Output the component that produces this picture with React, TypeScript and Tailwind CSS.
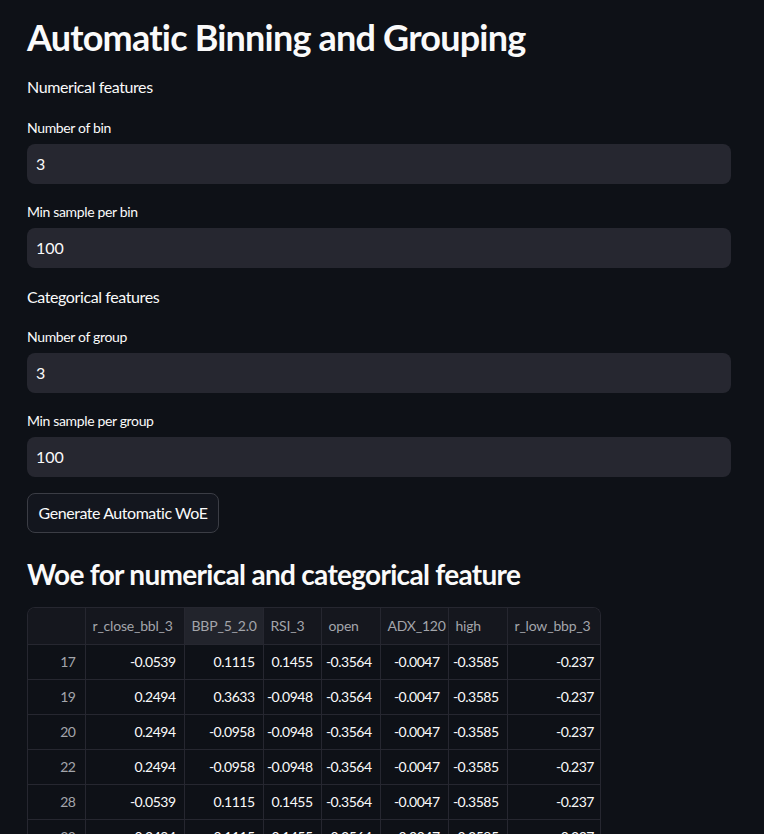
import React from "react";

const columns = ["r_close_bbl_3", "BBP_5_2.0", "RSI_3", "open", "ADX_120", "high", "r_low_bbp_3"];
const widths = ["w-[57px]", "w-[99px]", "w-[79px]", "w-[58px]", "w-[59px]", "w-[68px]", "w-[59px]", "w-[95px]"];

const rows: [string, string[]][] = [
  ["17", ["-0.0539", "0.1115", "0.1455", "-0.3564", "-0.0047", "-0.3585", "-0.237"]],
  ["19", ["0.2494", "0.3633", "-0.0948", "-0.3564", "-0.0047", "-0.3585", "-0.237"]],
  ["20", ["0.2494", "-0.0958", "-0.0948", "-0.3564", "-0.0047", "-0.3585", "-0.237"]],
  ["22", ["0.2494", "-0.0958", "-0.0948", "-0.3564", "-0.0047", "-0.3585", "-0.237"]],
  ["28", ["-0.0539", "0.1115", "0.1455", "-0.3564", "-0.0047", "-0.3585", "-0.237"]],
  ["30", ["0.2494", "0.1115", "0.1455", "-0.3564", "-0.0047", "-0.3585", "-0.237"]],
];

function Field({ label, value }: { label: string; value: string }) {
  return (
    <div className="flex flex-col">
      <label className="text-[14px] leading-5 tracking-[-0.35px] text-[#fafafa]">{label}</label>
      <div className="mt-[6px] h-10 w-full rounded-lg bg-[#262730] flex items-center pl-[9px] text-[16px] text-[#fafafa]">
        {value}
      </div>
    </div>
  );
}

export default function App() {
  return (
    <div
      className="w-full h-[834px] overflow-hidden bg-[#0e1117] text-[#fafafa]"
      style={{ fontFamily: "Lato, 'Liberation Sans', sans-serif" }}
    >
      <div className="pl-[27px] pr-[33px] pt-4">
        <h1 className="text-[36px] leading-[43px] font-bold tracking-[-0.8px]">Automatic Binning and Grouping</h1>

        <p className="mt-4 text-[16px] leading-6 tracking-[-0.4px]">Numerical features</p>
        <div className="mt-[19px]">
          <Field label="Number of bin" value="3" />
        </div>
        <div className="mt-[18px]">
          <Field label="Min sample per bin" value="100" />
        </div>

        <p className="mt-[17px] text-[16px] leading-6 tracking-[-0.4px]">Categorical features</p>
        <div className="mt-[18px]">
          <Field label="Number of group" value="3" />
        </div>
        <div className="mt-[18px]">
          <Field label="Min sample per group" value="100" />
        </div>

        <button className="mt-4 h-10 w-[192px] rounded-lg border border-[#3b3d45] bg-[#13161e] text-[16px] tracking-[-0.45px] text-[#fafafa]">
          Generate Automatic WoE
        </button>

        <h2 className="mt-6 text-[28px] leading-[34px] font-bold tracking-[-0.7px]">
          Woe for numerical and categorical feature
        </h2>

        <div className="mt-4 w-[574px] rounded-t-lg border border-b-0 border-[#262730] overflow-hidden">
          <table className="border-collapse text-[14px] tracking-[-0.5px] table-fixed w-full">
            <thead>
              <tr className="h-[36px] bg-[#15171e] text-[#a3a5ab]">
                <th className={`${widths[0]} border-r border-b border-[#262730]`}></th>
                {columns.map((c, i) => (
                  <th
                    key={c}
                    className={`${widths[i + 1]} border-r last:border-r-0 border-b border-[#262730] font-normal text-left pl-[7px] tracking-[-0.2px] whitespace-nowrap overflow-hidden ${
                      i === 1 ? "bg-[#22242c]" : ""
                    }`}
                  >
                    {c}
                  </th>
                ))}
              </tr>
            </thead>
            <tbody>
              {rows.map(([idx, vals]) => (
                <tr key={idx} className="h-[35px]">
                  <td className="border-r border-b border-[#262730] text-right pr-[9px] text-[#a3a5ab]">{idx}</td>
                  {vals.map((v, i) => (
                    <td
                      key={i}
                      className="border-r last:border-r-0 border-b border-[#262730] text-right pr-[8px] whitespace-nowrap"
                    >
                      {v}
                    </td>
                  ))}
                </tr>
              ))}
            </tbody>
          </table>
        </div>
      </div>
    </div>
  );
}
